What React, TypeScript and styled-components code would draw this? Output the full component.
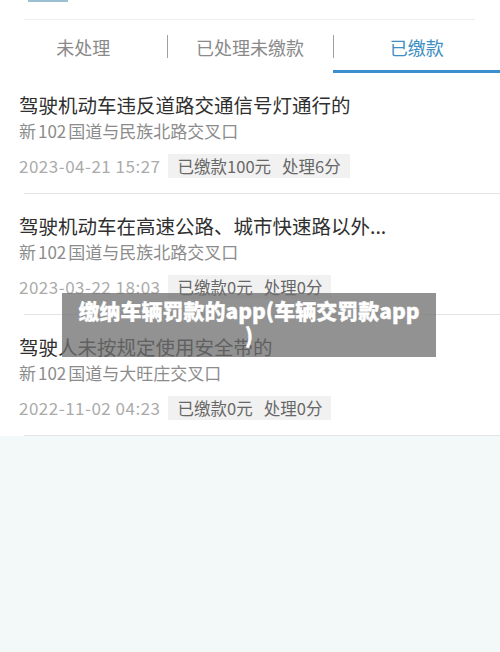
import React from "react";
import styled, { createGlobalStyle } from "styled-components";

const Global = createGlobalStyle`
  html, body { margin: 0; padding: 0; }
  body {
    background: #f3f8f8;
    font-family: "Noto Sans CJK SC", "Noto Sans", sans-serif;
    width: 500px;
    height: 652px;
    overflow: hidden;
  }
`;

const Page = styled.div`
  position: relative;
  width: 500px;
  height: 652px;
  background: #f3f8f8;
`;

const Panel = styled.div`
  background: #fff;
  display: flex;
  flex-direction: column;
`;

const TopStrip = styled.div`
  height: 19px;
  display: flex;
  align-items: flex-start;
  padding-left: 28px;
`;

const StripMark = styled.div`
  width: 40px;
  height: 2px;
  background: #9dbfd4;
`;

const Rule = styled.div<{ $left: number; $right: number; $color: string }>`
  height: 1px;
  margin-left: ${(p) => p.$left}px;
  margin-right: ${(p) => p.$right}px;
  background: ${(p) => p.$color};
`;

const Tabs = styled.div`
  display: grid;
  grid-template-columns: 1fr 1fr 1fr;
  height: 53px;
`;

const Tab = styled.div<{ $active?: boolean; $sep?: boolean }>`
  position: relative;
  display: flex;
  align-items: center;
  justify-content: center;
  font-size: 18px;
  color: ${(p) => (p.$active ? "#3d8ec2" : "#8a8a8a")};
  border-bottom: 3px solid ${(p) => (p.$active ? "#3b8fcf" : "transparent")};
  padding-top: 3px;
  &::before {
    content: "";
    display: ${(p) => (p.$sep ? "block" : "none")};
    position: absolute;
    left: 0;
    top: 15px;
    width: 1px;
    height: 23px;
    background: #a0a0a0;
  }
`;

const Item = styled.div`
  display: flex;
  flex-direction: column;
  padding: 19px 0 15px 19px;
`;

const Title = styled.div`
  font-size: 19.5px;
  line-height: 26px;
  color: #2f2f2f;
  white-space: nowrap;
`;

const Address = styled.div`
  font-size: 17px;
  line-height: 26px;
  color: #8c8c8c;
`;

const Num = styled.span`
  margin: 0 2px;
`;

const MetaRow = styled.div`
  display: flex;
  align-items: center;
  margin-top: 10px;
  gap: 7px;
`;

const DateText = styled.span`
  font-size: 17px;
  letter-spacing: 0.5px;
  color: #ababab;
  line-height: 24px;
`;

const Tag = styled.span`
  display: inline-flex;
  align-items: center;
  gap: 11px;
  height: 24px;
  padding: 0 9px 0 10px;
  background: #f1f1f1;
  color: #676767;
  font-size: 16.5px;
`;

const Overlay = styled.div`
  position: absolute;
  left: 62px;
  top: 293px;
  width: 374px;
  height: 64px;
  box-sizing: border-box;
  padding-top: 5px;
  background: rgba(112, 112, 112, 0.76);
  color: #fff;
  font-weight: 900;
  font-size: 21px;
  line-height: 25px;
  text-align: center;
  -webkit-text-stroke: 0.3px #fff;
`;

const records = [
  {
    title: "驾驶机动车违反道路交通信号灯通行的",
    place: ["新", "102", "国道与民族北路交叉口"],
    date: "2023-04-21 15:27",
    paid: "已缴款100元",
    points: "处理6分",
  },
  {
    title: "驾驶机动车在高速公路、城市快速路以外...",
    place: ["新", "102", "国道与民族北路交叉口"],
    date: "2023-03-22 18:03",
    paid: "已缴款0元",
    points: "处理0分",
  },
  {
    title: "驾驶人未按规定使用安全带的",
    place: ["新", "102", "国道与大旺庄交叉口"],
    date: "2022-11-02 04:23",
    paid: "已缴款0元",
    points: "处理0分",
  },
];

export default function App() {
  return (
    <Page>
      <Global />
      <Panel>
        <TopStrip>
          <StripMark />
        </TopStrip>
        <Rule $left={24} $right={25} $color="#efefef" />
        <Tabs>
          <Tab>未处理</Tab>
          <Tab $sep>已处理未缴款</Tab>
          <Tab $sep $active>
            已缴款
          </Tab>
        </Tabs>
        {records.map((r, i) => (
          <React.Fragment key={i}>
            <Item>
              <Title>{r.title}</Title>
              <Address>
                {r.place[0]}
                <Num>{r.place[1]}</Num>
                {r.place[2]}
              </Address>
              <MetaRow>
                <DateText>{r.date}</DateText>
                <Tag>
                  <span>{r.paid}</span>
                  <span>{r.points}</span>
                </Tag>
              </MetaRow>
            </Item>
            <Rule $left={24} $right={0} $color="#e4e4e4" />
          </React.Fragment>
        ))}
      </Panel>
      <Overlay>
        缴纳车辆罚款的app(车辆交罚款app
        <br />)
      </Overlay>
    </Page>
  );
}
